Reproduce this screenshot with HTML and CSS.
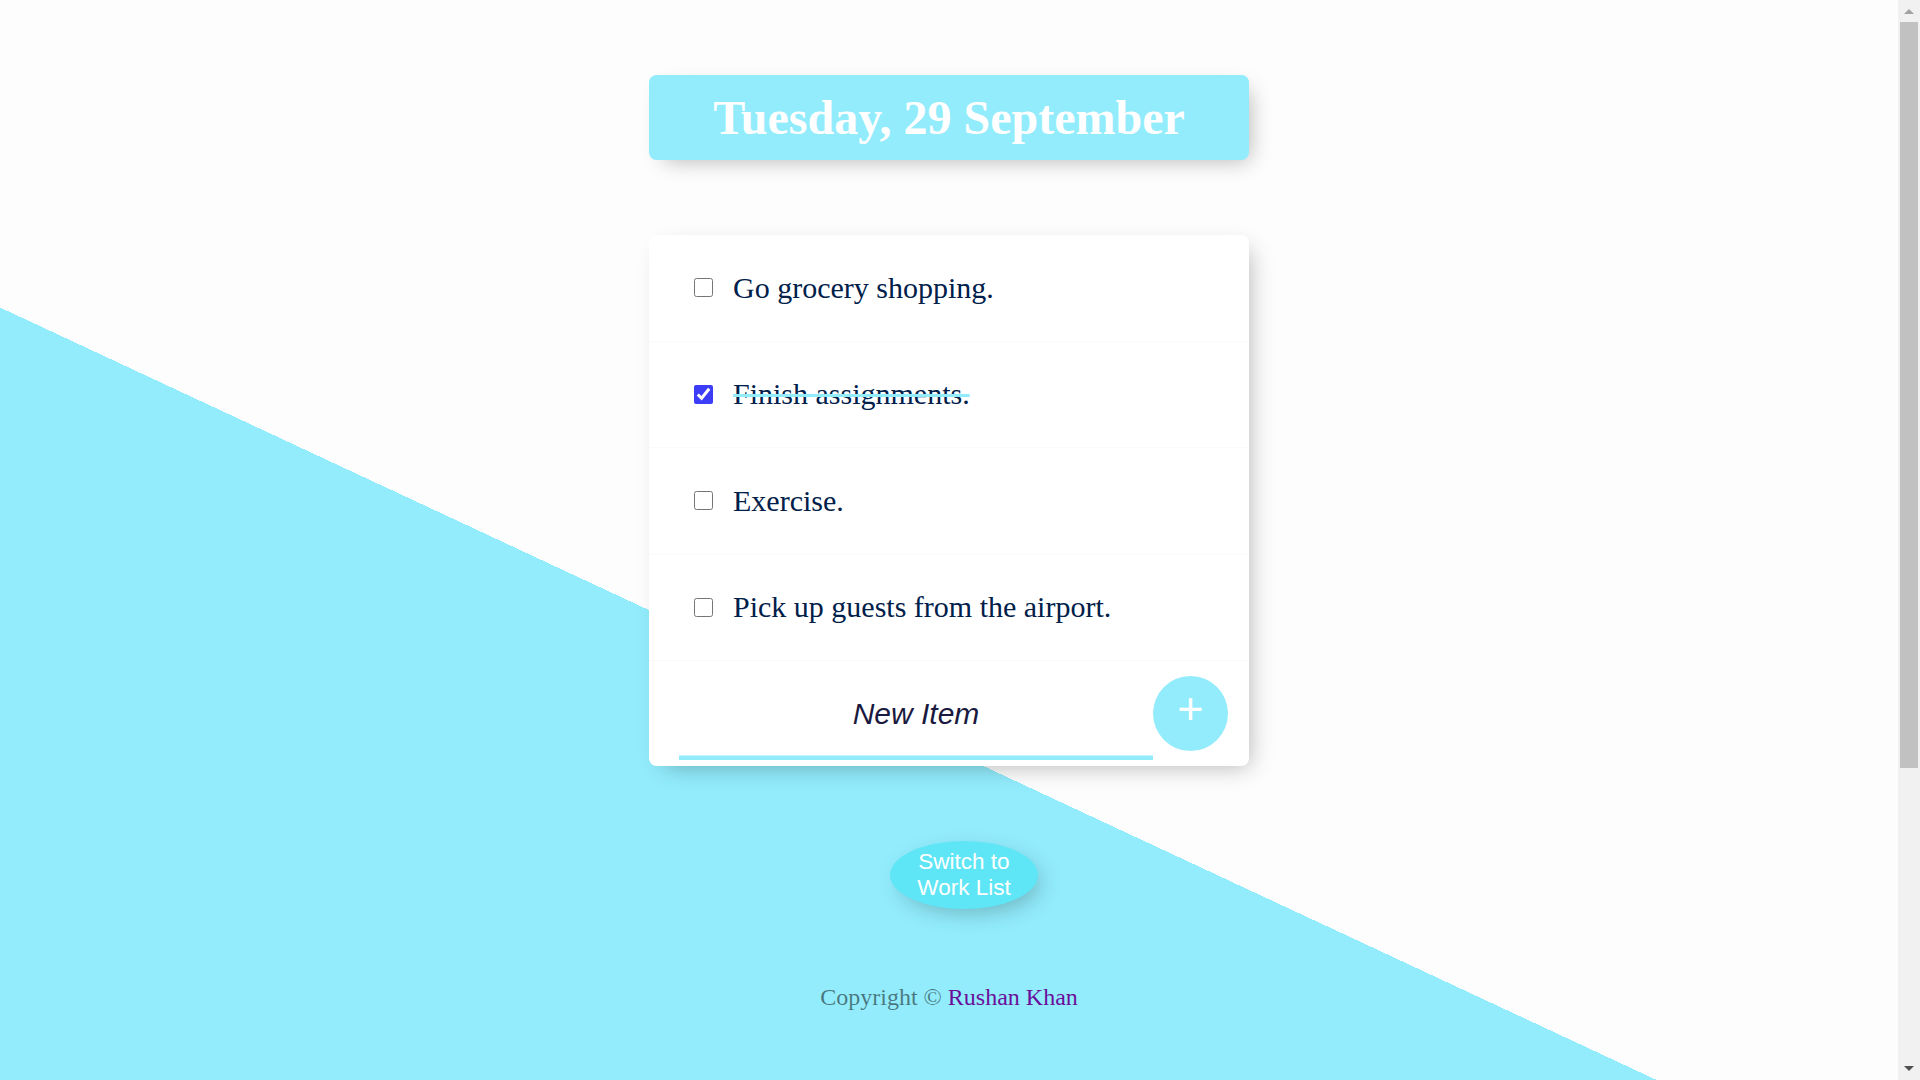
FILE: index.html
```html
<!DOCTYPE html>
<html lang="en">
<head>
<meta charset="utf-8">
<title>To-Do List</title>
<link rel="stylesheet" href="styles.css">
</head>
<body>
  <div class="box heading">
    <h1 class="title">Tuesday, 29 September</h1>
  </div>

  <div class="box list">
    <div class="item">
      <input type="checkbox" class="check">
      <p class="item-text">Go grocery shopping.</p>
    </div>
    <div class="item">
      <input type="checkbox" class="check" checked>
      <p class="item-text">Finish assignments.</p>
    </div>
    <div class="item">
      <input type="checkbox" class="check">
      <p class="item-text">Exercise.</p>
    </div>
    <div class="item">
      <input type="checkbox" class="check">
      <p class="item-text">Pick up guests from the airport.</p>
    </div>
    <form class="item new-item">
      <input type="text" class="new-input" name="newItem" placeholder="New Item" autocomplete="off">
      <button type="button" class="add-btn">+</button>
    </form>
  </div>

  <form class="switch-form">
    <button type="button" class="switch-btn">Switch to Work List</button>
  </form>

  <footer class="footer">Copyright © <a href="#" class="author">Rushan Khan</a></footer>

  <div class="scrollbar" aria-hidden="true">
    <div class="sb-btn"><span class="sb-arrow-up"></span></div>
    <div class="sb-track"><div class="sb-thumb"></div></div>
    <div class="sb-btn"><span class="sb-arrow-down"></span></div>
  </div>
</body>
</html>
```

FILE: styles.css
```css
html {
  min-height: 1500px;
  margin-right: 22px;
  overflow: hidden;
  background-color: #fdfdfd;
  background-image: linear-gradient(25deg, #92ecfc 50%, #fdfdfd 50%);
  font-family: "Liberation Serif", "Times New Roman", serif;
}

body {
  margin: 0 12px;
  font-size: 24px;
}

.box {
  max-width: 600px;
  margin: 75px auto;
  background: #ffffff;
  border-radius: 7.5px;
  box-shadow: 7.5px 7.5px 22.5px -7.5px rgba(0, 0, 0, 0.3);
}

.heading {
  background-color: #92ecfc;
  text-align: center;
}

.title {
  margin: 0;
  padding: 15px;
  color: #ffffff;
  font-size: 48px;
  font-weight: bold;
}

.item {
  min-height: 105.5px;
  display: flex;
  align-items: center;
  border-bottom: 1px solid #fafafa;
}

.item:last-child {
  min-height: 105px;
  border-bottom: 0;
}

.check {
  width: 19px;
  height: 19px;
  margin: 0 0 0 45px;
  accent-color: #3d3df7;
}

.item-text {
  margin: 0;
  padding: 0 0 0 20px;
  font-size: 30px;
  font-weight: 200;
  color: #00204a;
}

.check:checked + .item-text {
  text-decoration: line-through;
  text-decoration-color: #92ecfc;
  text-decoration-thickness: 3px;
}

.new-item {
  margin: 0 0 0 30px;
  text-align: center;
}

.new-input {
  box-sizing: border-box;
  width: 474px;
  height: 93px;
  padding: 0 3px;
  margin: 0;
  border: none;
  background: transparent;
  text-align: center;
  font-family: "Liberation Sans", Arial, sans-serif;
  font-size: 30px;
  font-style: italic;
  color: #1a1a40;
  outline: none;
  box-shadow: inset 0 -4.5px 0 0 #92ecfc;
}

.new-input::placeholder {
  color: #1a1a40;
  opacity: 1;
}

.add-btn {
  width: 75px;
  min-height: 75px;
  margin: 0;
  padding: 0 0 9px;
  border: 0;
  border-radius: 50%;
  background-color: #92ecfc;
  color: #ffffff;
  font-family: "Liberation Sans", Arial, sans-serif;
  font-size: 45px;
}

.switch-form {
  margin: 0 0 0 30px;
  text-align: center;
}

.switch-btn {
  width: 148px;
  height: 68px;
  margin: 0;
  padding: 0 20px;
  border: 0;
  border-radius: 50%;
  background-color: #5fe6f6;
  color: #ffffff;
  font-family: "Liberation Sans", Arial, sans-serif;
  font-size: 22.5px;
  line-height: 1.15;
  box-shadow: 6px 7.5px 24px -6px rgba(0, 0, 0, 0.28);
}

.footer {
  margin-top: 75px;
  text-align: center;
  color: rgba(0, 0, 0, 0.5);
}

.author {
  color: #6a0f9a;
  text-decoration: none;
}

/* browser scrollbar drawn over the right edge, as in the reference */
.scrollbar {
  position: fixed;
  top: 0;
  right: 0;
  width: 22px;
  height: 100vh;
  display: flex;
  flex-direction: column;
  background: #f1f1f1;
}

.sb-btn {
  height: 22px;
  flex: none;
  display: flex;
  align-items: center;
  justify-content: center;
}

.sb-arrow-up {
  width: 0;
  height: 0;
  border-left: 5px solid transparent;
  border-right: 5px solid transparent;
  border-bottom: 5px solid #a3a3a3;
  margin-top: 1px;
}

.sb-arrow-down {
  width: 0;
  height: 0;
  border-left: 5px solid transparent;
  border-right: 5px solid transparent;
  border-top: 5px solid #505050;
  margin-bottom: 1px;
}

.sb-track {
  flex: 1;
  padding: 0 2px;
}

.sb-thumb {
  height: 746px;
  background: #c1c1c1;
}
```
